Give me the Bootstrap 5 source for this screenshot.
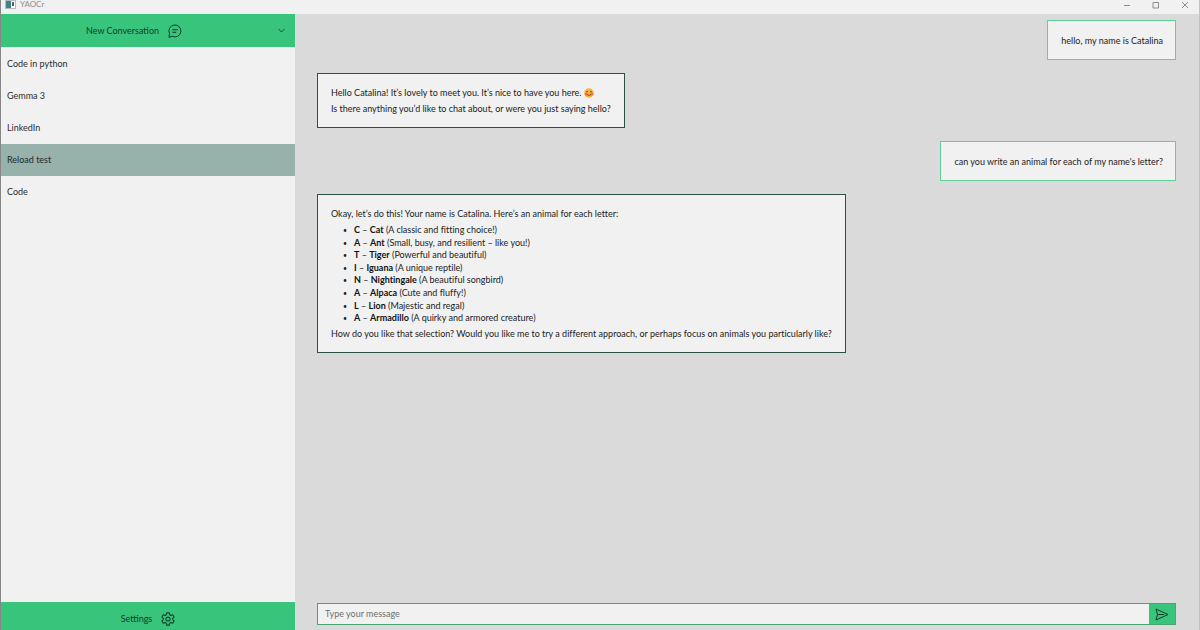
<!DOCTYPE html>
<html lang="en">
<head>
<meta charset="utf-8">
<meta name="viewport" content="width=device-width, initial-scale=1">
<title>YAOCr</title>
<link href="https://cdn.jsdelivr.net/npm/bootstrap@5.3.0/dist/css/bootstrap.min.css" rel="stylesheet">
<style>
:root { --green: #39c47c; --paper: #f1f1f1; --canvas: #dadada; --dark: #2c5046; }
body { font-family: Lato, "Open Sans", sans-serif; font-variant-ligatures: none; font-size: 9px; line-height: 16px; color: #222; background: var(--paper); }
.app { border-left: 1px solid #868686; border-right: 1px solid #c2c2c2; }
.title-bar { height: 14px; padding: 0 7px 5px 4px; color: #8c8c8c; font-size: 8px; line-height: 9px; }
.win-btn { color: #8c8c8c; width: 29px; line-height: 0; }
.win-btn:last-child { width: 11px; }
.side { flex: 0 0 auto; width: 24.54%; }
.bar-btn { background: var(--green); color: #123c28; height: 33px; }
.bar-btn.foot { height: 28px; padding-top: 5px; gap: 9px; font-size: 9px; line-height: 16px; }
.new-btn { gap: 9px; padding-right: 23px; color: inherit; font-size: 9px; line-height: 16px; }
.fold-btn { color: inherit; padding: 0 10px 0 0; }
.conv-list { padding-top: 1px; }
.conv-list .conv { height: 32px; padding: 0 6px; background: var(--paper); color: #2b2b2b; font-size: 9px; }
.conv-list .conv.active { background: #97b1ab; color: #1c2c28; }
.chat { background: var(--canvas); padding: 6px 23px 5px 22px; }
.thread { gap: 13px; }
.bubble { background: var(--paper); border: 1px solid var(--dark); padding: 11px 13px 10px; }
.bubble.mine { border-color: #5fd096; padding: 12px 12px 10px 13px; }
.bubble ul { margin: 2px 0 1px; padding-left: 16px; line-height: 1.4; list-style-type: "•"; }
.bubble li { padding-left: 7px; }
.bubble li::marker { font-size: 7px; }
.bubble b { color: #111; }
.smile { vertical-align: text-bottom; }
.composer { height: 22px; border: 1px solid #4aa775; background: var(--paper); }
.composer input { font-size: 9px; padding: 0 7px; color: #222; }
.composer input::placeholder { color: #707070; }
.send { width: 26px; background: var(--green); color: #123c28; }
</style>
</head>
<body>
<div class="app d-flex flex-column vh-100 overflow-hidden">
  <header class="title-bar d-flex align-items-center">
    <svg width="11" height="9" viewBox="0 0 11 9" aria-hidden="true"><rect x=".5" y=".5" width="10" height="8" fill="#f7fafa" stroke="#b4bcbe"/><rect x="1" y="1" width="5" height="7" fill="#3f8287"/><rect x="7" y="2" width="2" height="4" fill="#56636a"/></svg>
    <span class="ms-1">YAOCr</span>
    <div class="ms-auto d-flex">
      <button class="win-btn btn p-0 border-0 text-start" aria-label="Minimize"><svg width="8" height="8" viewBox="0 0 8 8" fill="none" stroke="currentColor"><path d="M1 4.500h6"/></svg></button>
      <button class="win-btn btn p-0 border-0 text-start" aria-label="Maximize"><svg width="8" height="8" viewBox="0 0 8 8" fill="none" stroke="currentColor"><path d="M1 1.500h5.500v5.500h-5.500z"/></svg></button>
      <button class="win-btn btn p-0 border-0 text-start" aria-label="Close"><svg width="8" height="8" viewBox="0 0 8 8" fill="none" stroke="currentColor"><path d="M1 1l6 6M7 1l-6 6"/></svg></button>
    </div>
  </header>
  <div class="d-flex flex-grow-1 overflow-hidden">
    <nav class="side d-flex flex-column" aria-label="Conversations">
      <div class="bar-btn d-flex align-items-center">
        <button class="new-btn btn border-0 rounded-0 py-0 flex-grow-1 d-flex align-items-center justify-content-center">New Conversation
          <svg width="14" height="14" viewBox="0 0 14 14" fill="none" stroke="currentColor" stroke-linecap="round" stroke-linejoin="round"><path d="M1 13l.5-3.400A6 6 0 1 1 4.300 12.400z"/><path d="M4.800 5.800h4.700M4.800 8.300h3"/></svg></button>
        <button class="fold-btn btn border-0 d-flex" aria-label="Collapse list"><svg width="7" height="5" viewBox="0 0 7 5" fill="none" stroke="currentColor" stroke-width=".9"><path d="M.5 1l3 3 3-3"/></svg></button>
      </div>
      <div class="conv-list list-group list-group-flush rounded-0 flex-grow-1">
        <a href="#" class="conv list-group-item list-group-item-action border-0 m-0 d-flex align-items-center">Code in python</a>
        <a href="#" class="conv list-group-item list-group-item-action border-0 m-0 d-flex align-items-center">Gemma 3</a>
        <a href="#" class="conv list-group-item list-group-item-action border-0 m-0 d-flex align-items-center">LinkedIn</a>
        <a href="#" class="conv active list-group-item list-group-item-action border-0 m-0 d-flex align-items-center" aria-current="true">Reload test</a>
        <a href="#" class="conv list-group-item list-group-item-action border-0 m-0 d-flex align-items-center">Code</a>
      </div>
      <button class="bar-btn foot btn border-0 rounded-0 pb-0 d-flex align-items-center justify-content-center">Settings
        <svg width="14" height="14" viewBox="0 0 24 24" fill="none" stroke="currentColor" stroke-width="1.800" stroke-linejoin="round"><circle cx="12" cy="12" r="3.500"/><path d="M9.700 1.500h4.600l.7 3.300 2 1.200 3.200-1.100 2.300 4L20 11.100v1.800l2.500 2.200-2.300 4L17 18l-2 1.200-.7 3.300H9.700L9 19.200 7 18l-3.200 1.100-2.300-4L4 12.900v-1.800L1.500 8.900l2.300-4L7 6l2-1.200z"/></svg></button>
    </nav>
    <main class="chat flex-grow-1 d-flex flex-column">
      <div class="thread d-flex flex-column flex-grow-1">
        <div class="bubble mine align-self-end">hello, my name is Catalina</div>
        <div class="bubble align-self-start">
          <p class="mb-0">Hello Catalina! It’s lovely to meet you. It’s nice to have you here.
            <svg class="smile" width="10" height="10" viewBox="0 0 20 20" role="img" aria-label="smiling face"><circle cx="10" cy="10" r="9.500" fill="#fbb23c"/><circle cx="4.500" cy="12" r="3" fill="#f4694a"/><circle cx="15.500" cy="12" r="3" fill="#f4694a"/><path d="M4 8q2-3 4 0M12 8q2-3 4 0M6 13q4 4 8 0" fill="none" stroke="#6b3d1c" stroke-width="1.600"/></svg></p>
          <p class="mb-0">Is there anything you’d like to chat about, or were you just saying hello?</p>
        </div>
        <div class="bubble mine align-self-end">can you write an animal for each of my name's letter?</div>
        <div class="bubble align-self-start">
          <p class="mb-0">Okay, let’s do this! Your name is Catalina. Here’s an animal for each letter:</p>
          <ul>
            <li><b>C</b> – <b>Cat</b> (A classic and fitting choice!)</li>
            <li><b>A</b> – <b>Ant</b> (Small, busy, and resilient – like you!)</li>
            <li><b>T</b> – <b>Tiger</b> (Powerful and beautiful)</li>
            <li><b>I</b> – <b>Iguana</b> (A unique reptile)</li>
            <li><b>N</b> – <b>Nightingale</b> (A beautiful songbird)</li>
            <li><b>A</b> – <b>Alpaca</b> (Cute and fluffy!)</li>
            <li><b>L</b> – <b>Lion</b> (Majestic and regal)</li>
            <li><b>A</b> – <b>Armadillo</b> (A quirky and armored creature)</li>
          </ul>
          <p class="mb-0">How do you like that selection? Would you like me to try a different approach, or perhaps focus on animals you particularly like?</p>
        </div>
      </div>
      <form class="composer d-flex">
        <input type="text" class="flex-grow-1 border-0 bg-transparent" placeholder="Type your message" aria-label="Type your message">
        <button type="button" class="send btn border-0 rounded-0 p-0 d-flex align-items-center justify-content-center" aria-label="Send"><svg width="14" height="13" viewBox="0 0 14 13" fill="none" stroke="currentColor" stroke-linejoin="round"><path d="M1 1l12 5.500L1 12l1.500-5.500zM2.500 6.500H9"/></svg></button>
      </form>
    </main>
  </div>
</div>
<script src="https://cdn.jsdelivr.net/npm/bootstrap@5.3.0/dist/js/bootstrap.bundle.min.js"></script>
</body>
</html>
